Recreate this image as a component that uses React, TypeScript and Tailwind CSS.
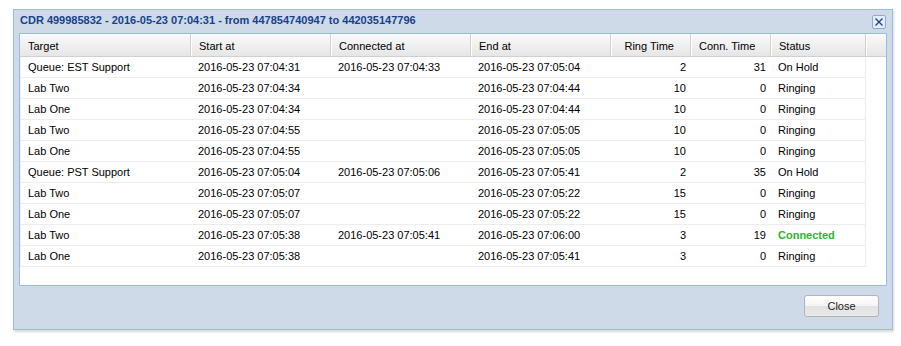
type Row = {
  target: string;
  start: string;
  connected: string;
  end: string;
  ring: number;
  conn: number;
  status: string;
};

const rows: Row[] = [
  { target: "Queue: EST Support", start: "2016-05-23 07:04:31", connected: "2016-05-23 07:04:33", end: "2016-05-23 07:05:04", ring: 2, conn: 31, status: "On Hold" },
  { target: "Lab Two", start: "2016-05-23 07:04:34", connected: "", end: "2016-05-23 07:04:44", ring: 10, conn: 0, status: "Ringing" },
  { target: "Lab One", start: "2016-05-23 07:04:34", connected: "", end: "2016-05-23 07:04:44", ring: 10, conn: 0, status: "Ringing" },
  { target: "Lab Two", start: "2016-05-23 07:04:55", connected: "", end: "2016-05-23 07:05:05", ring: 10, conn: 0, status: "Ringing" },
  { target: "Lab One", start: "2016-05-23 07:04:55", connected: "", end: "2016-05-23 07:05:05", ring: 10, conn: 0, status: "Ringing" },
  { target: "Queue: PST Support", start: "2016-05-23 07:05:04", connected: "2016-05-23 07:05:06", end: "2016-05-23 07:05:41", ring: 2, conn: 35, status: "On Hold" },
  { target: "Lab Two", start: "2016-05-23 07:05:07", connected: "", end: "2016-05-23 07:05:22", ring: 15, conn: 0, status: "Ringing" },
  { target: "Lab One", start: "2016-05-23 07:05:07", connected: "", end: "2016-05-23 07:05:22", ring: 15, conn: 0, status: "Ringing" },
  { target: "Lab Two", start: "2016-05-23 07:05:38", connected: "2016-05-23 07:05:41", end: "2016-05-23 07:06:00", ring: 3, conn: 19, status: "Connected" },
  { target: "Lab One", start: "2016-05-23 07:05:38", connected: "", end: "2016-05-23 07:05:41", ring: 3, conn: 0, status: "Ringing" },
];

const headCell = "h-full flex items-center pt-[2px] border-l border-white border-r border-r-[#d0d0d0]";

export default function App() {
  return (
    <div className="w-[901px] h-[346px] bg-white pt-[9px] pl-[13px] font-['Liberation_Sans',Arial,sans-serif] text-[11px] text-black">
      <div className="w-[880px] h-[321px] border border-[#99bbe8] bg-[#cfdae8] shadow-[1px_2px_2px_rgba(0,0,0,0.15)] flex flex-col">
        {/* title bar */}
        <div className="h-[23px] flex items-start justify-between pl-[6px] pr-[6px]">
          <span className="mt-[3px] font-bold text-[#15428b] leading-[15px]">
            CDR 499985832 - 2016-05-23 07:04:31 - from 447854740947 to 442035147796
          </span>
          <div className="mt-[5px] w-[14px] h-[14px] border border-[#8eaad4] bg-[#e4ecf7] rounded-[2px] flex items-center justify-center">
            <svg width="10" height="10" viewBox="0 0 10 10">
              <path d="M1.5 1.5 L8.5 8.5 M8.5 1.5 L1.5 8.5" stroke="#15428b" strokeWidth="1.3" />
            </svg>
          </div>
        </div>

        {/* grid */}
        <div className="mx-[5px] h-[253px] border border-[#99bbe8] bg-white">
          <div className="flex h-[23px] border-b border-[#d0d0d0] bg-gradient-to-b from-[#fafafa] to-[#e6e6e6]">
            <div className={`${headCell} w-[171px] border-l-0 pl-[8px]`}>Target</div>
            <div className={`${headCell} w-[140px] pl-[7px]`}>Start at</div>
            <div className={`${headCell} w-[140px] pl-[7px]`}>Connected at</div>
            <div className={`${headCell} w-[140px] pl-[7px]`}>End at</div>
            <div className={`${headCell} w-[80px] justify-end`}>
              <span className="mr-[16px]">Ring Time</span>
            </div>
            <div className={`${headCell} w-[80px] pl-[7px]`}>Conn. Time</div>
            <div className={`${headCell} w-[95px] pl-[7px]`}>Status</div>
            <div className="h-full flex-1 border-l border-white" />
          </div>
          {rows.map((r, i) => (
            <div key={i} className="flex w-[846px] h-[21px] items-center pt-[1px] border-x border-b border-[#ededed]">
              <div className="w-[170px] pl-[7px]">{r.target}</div>
              <div className="w-[140px] pl-[7px]">{r.start}</div>
              <div className="w-[140px] pl-[7px]">{r.connected}</div>
              <div className="w-[140px] pl-[7px]">{r.end}</div>
              <div className="w-[80px] text-right pr-[5px]">{r.ring}</div>
              <div className="w-[80px] text-right pr-[5px]">{r.conn}</div>
              <div
                className={`w-[94px] pl-[7px] ${r.status === "Connected" ? "font-bold text-[#2db52d]" : ""}`}
              >
                {r.status}
              </div>
            </div>
          ))}
        </div>

        {/* footer */}
        <div className="flex justify-end pt-[9px] pr-[13px]">
          <button className="w-[75px] h-[22px] rounded-[3px] border border-[#b4b4b4] bg-[linear-gradient(to_bottom,#ffffff_0%,#f4f4f4_50%,#e2e2e2_50%,#e9e9e9_100%)] text-[11px] text-[#222]">
            Close
          </button>
        </div>
      </div>
    </div>
  );
}
